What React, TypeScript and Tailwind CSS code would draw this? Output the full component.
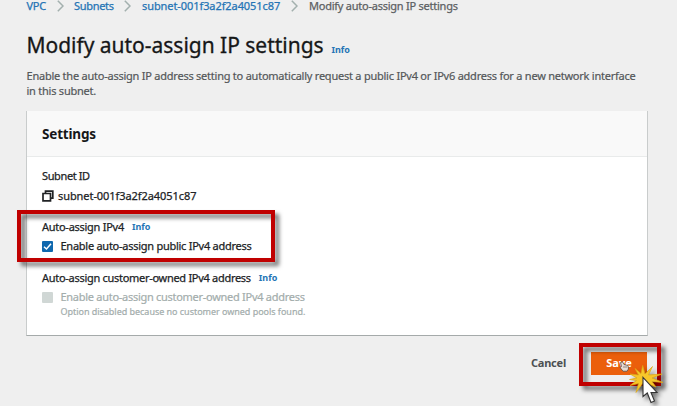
import type { ReactNode } from "react";

function Separator() {
  return (
    <svg width="7" height="12" viewBox="0 0 7 12" fill="none" stroke="#a3b0ae" strokeWidth="1.5" className="shrink-0">
      <path d="M0.8 0.8 6 6 0.8 11.2" />
    </svg>
  );
}

function Info() {
  return <a className="text-[9px] font-bold text-[#2474b5]">Info</a>;
}

function Label({ children, className }: { children: ReactNode; className: string }) {
  return <span className={`text-[11px] text-[#202224] [-webkit-text-stroke:0.25px] ${className}`}>{children}</span>;
}

function CopyIcon() {
  return (
    <svg width="12" height="12" viewBox="0 0 12 12" fill="none" stroke="#202224" strokeWidth="1.7">
      <path d="M3.500 3V1.200h7.300v7H9M1 3.500h7.500v7.300H1z" />
    </svg>
  );
}

function Highlight({ className }: { className: string }) {
  return <div className={`absolute border-4 border-[#c00000] drop-shadow-[4px_4px_2px_rgba(0,0,0,0.55)] ${className}`} />;
}

function ClickMark() {
  return (
    <svg className="absolute left-[612px] top-[356px] drop-shadow-[3px_3px_2px_rgba(0,0,0,0.5)]" width="65" height="50" viewBox="612 356 65 50">
      <path
        d="M642.700 365.500 645 374 652.500 366.500 648.500 375 662 374 652 378 663 382.500 652 381.500 656 387 648 384 643 383 636 392.500 638.500 383.500 630 385.500 636.500 380.500 629.500 379.500 637 378 630 374 638.500 375 635 368.500 641 373.500Z"
        fill="#f7c62a" stroke="#dda615" strokeWidth=".7"
      />
      <path d="M643 377.300V396.500L647.300 393 651 402.500 654.500 401 651 392.500H657Z" fill="#fff" stroke="#333" strokeWidth="1.100" />
    </svg>
  );
}

function Hand() {
  return (
    <svg className="absolute left-[619px] top-[361px]" width="11" height="11" viewBox="0 0 11 11">
      <path d="M1.500 1.500 3.500.8 5 3.500 9 4.500 9.500 8 8 10.200H4L1 6.500 2.500 5.500Z" fill="#e8dcd4" stroke="#5a4a42" strokeWidth=".8" />
      <path d="M5 5v2M7 5v2" stroke="#5a4a42" strokeWidth=".6" />
    </svg>
  );
}

export default function App() {
  return (
    <div className="relative h-[406px] w-[677px] overflow-hidden whitespace-nowrap bg-[#efefef] font-['Noto_Sans','Open_Sans',sans-serif] text-[11px] text-[#202224]">
      <nav className="flex h-3 items-center pl-[26.500px] leading-3 text-[#2474b5] [-webkit-text-stroke:0.25px]">
        <a className="w-[30px] tracking-[-0.3px]">VPC</a>
        <Separator />
        <a className="ml-[10.500px] w-[50px] tracking-[-0.3px]">Subnets</a>
        <Separator />
        <a className="ml-[11px] w-[149px] tracking-[-0.08px]">subnet-001f3a2f2a4051c87</a>
        <Separator />
        <span className="ml-[11px] tracking-[-0.24px] text-[#5c6062]">Modify auto-assign IP settings</span>
      </nav>

      <header className="pl-[26.500px] pt-[16.500px]">
        <div className="flex h-8 items-baseline">
          <h1 className="w-[305px] text-[21px] leading-8 tracking-[-0.02px] text-[#161718] [-webkit-text-stroke:0.3px]">Modify auto-assign IP settings</h1>
          <Info />
        </div>
        <p className="mt-[7.500px] text-[11px] leading-[15px] tracking-[-0.235px] text-[#545759] [-webkit-text-stroke:0.2px]">
          Enable the auto-assign IP address setting to automatically request a public IPv4 or IPv6 address for a new network interface
          <br />
          in this subnet.
        </p>
      </header>

      <section className="ml-[26px] mt-[13px] h-[225px] w-[622px] border border-t-0 border-[#c9cccc] border-b-[#a5aaaa] bg-white">
        <div className="flex h-[46px] items-center border-b border-[#e9ebeb] bg-[#f9f9f9] pl-[15px] pt-px">
          <h2 className="text-[13.500px] font-bold tracking-[-0.18px] text-[#161718]">Settings</h2>
        </div>
        <div className="pl-[15px] pt-[9px]">
          <div className="flex h-5 items-center"><Label className="tracking-[-0.38px]">Subnet ID</Label></div>
          <div className="flex h-5 items-center gap-1">
            <CopyIcon />
            <Label className="tracking-[-0.07px]">subnet-001f3a2f2a4051c87</Label>
          </div>
          <div className="mt-[11px] flex h-5 items-center gap-2">
            <Label className="tracking-[-0.27px]">Auto-assign IPv4</Label>
            <Info />
          </div>
          <label className="flex h-[19px] items-center gap-[7.500px]">
            <span className="flex size-[11px] items-center justify-center rounded-[1px] bg-[#0f68ae]">
              <svg width="9" height="9" viewBox="0 0 9 9" fill="none" stroke="white" strokeWidth="1.500"><path d="M1 4.700 3.500 7 8 1.800" /></svg>
            </span>
            <Label className="tracking-[-0.26px]">Enable auto-assign public IPv4 address</Label>
          </label>
          <div className="mt-3 flex h-5 items-center gap-2">
            <Label className="tracking-[-0.29px]">Auto-assign customer-owned IPv4 address</Label>
            <Info />
          </div>
          <label className="flex h-[19px] items-center gap-[7.500px] text-[#a3adac]">
            <span className="size-[11px] rounded-[1px] bg-[#d0d7d5]" />
            <span className="tracking-[-0.28px] [-webkit-text-stroke:0.2px]">Enable auto-assign customer-owned IPv4 address</span>
          </label>
          <p className="pl-[18.500px] text-[9px] leading-[10px] tracking-[-0.03px] text-[#a3adac] [-webkit-text-stroke:0.2px]">Option disabled because no customer owned pools found.</p>
        </div>
      </section>

      <footer className="mt-[15px] flex h-[24px] items-center justify-end pr-[30px] text-[11px] font-bold">
        <button className="mr-[25px] tracking-[-0.2px] text-[#4c5052]">Cancel</button>
        <button className="h-[23px] w-[56px] bg-[#eb5f0c] text-white">Save</button>
      </footer>

      <Highlight className="left-[17px] top-[210px] h-[52px] w-[258px]" />
      <Highlight className="left-[579px] top-[343px] h-[43px] w-[82px]" />
      <Hand />
      <ClickMark />
    </div>
  );
}
